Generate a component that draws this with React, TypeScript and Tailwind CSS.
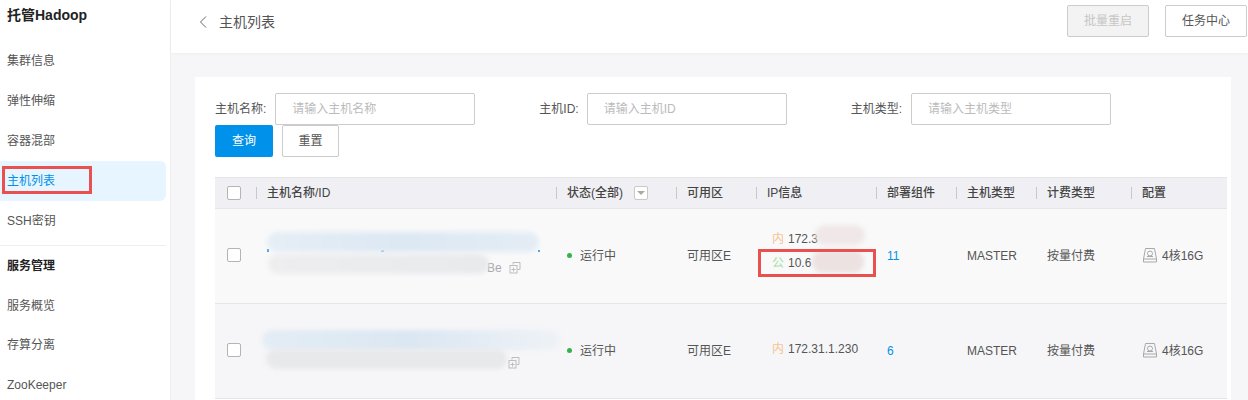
import React from "react"

const gridCols = "grid grid-cols-[41px_300px_120px_80px_120px_80px_80px_95px_96px]"

function NavItem({ label, active }: { label: string; active?: boolean }) {
  return (
    <div className={`relative h-10 flex items-center pl-[7px] mr-[4px] rounded-r-md ${active ? "bg-[#e6f5ff] text-[#0091ea]" : "text-[#555]"}`}>
      {label}
      {active && <div className="absolute left-[2px] top-[5px] w-[90px] h-[28px] border-[3px] border-[#e95050]" />}
    </div>
  )
}

function HeadCell({ label, children }: { label: string; children?: React.ReactNode }) {
  return (
    <div className="flex items-center">
      <span className="w-px h-3 bg-[#c8c8c8] mr-[10px]" />
      <span>{label}</span>
      {children}
    </div>
  )
}

function CopyIcon() {
  return (
    <svg width="12" height="12" viewBox="0 0 12 12" fill="none" stroke="#bdbdbd" strokeWidth="1">
      <path d="M4 2.5V.5h7v7H8.5" />
      <rect x="1" y="3.5" width="7" height="7.5" />
      <path d="M4.5 5.5v4M2.5 7.5h4" />
    </svg>
  )
}

function DiskIcon() {
  return (
    <svg width="14" height="15" viewBox="0 0 14 15" fill="none" stroke="#a8a8a8" strokeWidth="1">
      <path d="M2.5.5h9l2 10.5v3h-13V11z" />
      <path d="M.5 11h13" />
      <circle cx="7" cy="5.5" r="2.5" />
      <path d="M4 8.5h6" />
    </svg>
  )
}

function Smudge({ className }: { className: string }) {
  return <div className={`absolute rounded-full blur-[2px] ${className}`} />
}

function Row({ rowBg, count, name, ip }: { rowBg: string; count: string; name: React.ReactNode; ip: React.ReactNode }) {
  return (
    <div className={`${gridCols} h-[95px] items-center border-b border-[#e6e6e6] ${rowBg}`}>
      <div className="pl-3 -mt-[4px]">
        <div className="w-[14px] h-[14px] bg-white border border-[#b4b4b4] rounded-[2px]" />
      </div>
      {name}
      <div className="flex items-center pl-[11px] -mt-[2px]">
        <span className="w-[5px] h-[5px] rounded-full bg-[#35b34a] mr-2" />
        运行中
      </div>
      <div className="pl-[11px] -mt-[2px]">可用区E</div>
      {ip}
      <div className="pl-[11px] -mt-[2px] text-[#0091ea]">{count}</div>
      <div className="pl-[11px] -mt-[2px]">MASTER</div>
      <div className="pl-[11px] -mt-[2px]">按量付费</div>
      <div className="flex items-center gap-[5px] pl-3 -mt-[2px]">
        <DiskIcon />
        4核16G
      </div>
    </div>
  )
}

export default function App() {
  return (
    <div className="w-[1248px] h-[400px] overflow-hidden flex bg-[#f6f6f8] text-xs text-[#555] font-['Liberation_Sans','Noto_Sans_CJK_SC',sans-serif]">
      {/* Sidebar */}
      <aside className="w-[171px] shrink-0 bg-white border-r border-[#eeeeee]">
        <div className="h-[30px] flex items-center pl-[7px] text-sm font-bold text-[#222]">托管Hadoop</div>
        <div className="mt-[11px]">
          <NavItem label="集群信息" />
          <NavItem label="弹性伸缩" />
          <NavItem label="容器混部" />
          <NavItem label="主机列表" active />
          <NavItem label="SSH密钥" />
        </div>
        <div className="mt-[4px] mr-[4px] border-t border-[#eeeeee]" />
        <div className="h-10 flex items-center pl-[7px] font-bold text-[#222]">服务管理</div>
        <NavItem label="服务概览" />
        <div className="-mt-px">
          <NavItem label="存算分离" />
          <NavItem label="ZooKeeper" />
        </div>
      </aside>

      <main className="flex-1 min-w-0">
        {/* Top bar */}
        <div className="relative h-[53px] bg-white flex justify-between pt-[5px] pl-7 pr-px shadow-[0_1px_3px_rgba(0,0,0,0.03)]">
          <div className="flex items-center h-[33px] text-sm">
            <svg width="8" height="12" viewBox="0 0 8 12" fill="none" stroke="#666" strokeWidth="1">
              <path d="M7 .5 1.5 6 7 11.5" />
            </svg>
            <span className="ml-3">主机列表</span>
          </div>
          <div className="flex gap-4">
            <button className="w-[82px] h-8 bg-[#f3f3f3] border border-[#cccccc] rounded-[2px] text-[#c6c6c6]">批量重启</button>
            <button className="w-[82px] h-8 bg-white border border-[#cccccc] rounded-[2px] text-[#555]">任务中心</button>
          </div>
        </div>

        {/* Card */}
        <div className="mt-6 ml-6 w-[1036px] h-[400px] bg-white pt-4 pl-5">
          <div className="flex gap-16">
            <div className="flex items-center">
              <span className="mr-[9px]">主机名称:</span>
              <div className="w-[200px] h-8 flex items-center pl-4 border border-[#cccccc] rounded-[2px] text-[#bbbbbb]">请输入主机名称</div>
            </div>
            <div className="flex items-center">
              <span className="mr-[8px]">主机ID:</span>
              <div className="w-[200px] h-8 flex items-center pl-4 border border-[#cccccc] rounded-[2px] text-[#bbbbbb]">请输入主机ID</div>
            </div>
            <div className="flex items-center">
              <span className="mr-[9px]">主机类型:</span>
              <div className="w-[200px] h-8 flex items-center pl-4 border border-[#cccccc] rounded-[2px] text-[#bbbbbb]">请输入主机类型</div>
            </div>
          </div>
          <div className="flex gap-[9px]">
            <button className="w-[58px] h-8 bg-[#0091ea] text-white rounded-[2px]">查询</button>
            <button className="w-[57px] h-8 bg-white border border-[#cccccc] rounded-[2px]">重置</button>
          </div>

          {/* Table */}
          <div className="mt-5 w-[1012px] text-[#555]">
            <div className={`${gridCols} h-[32px] items-center bg-[#f0f0f4] border-y border-[#e6e6e6] font-medium text-[#444]`}>
              <div className="pl-3">
                <div className="w-[14px] h-[14px] bg-white border border-[#b4b4b4] rounded-[2px]" />
              </div>
              <HeadCell label="主机名称/ID" />
              <HeadCell label="状态(全部)">
                <span className="ml-[11px] w-[14px] h-[14px] flex items-center justify-center bg-white border border-[#c8c8c8] rounded-[2px]">
                  <span className="border-x-[4px] border-x-transparent border-t-[4px] border-t-[#aaaaaa]" />
                </span>
              </HeadCell>
              <HeadCell label="可用区" />
              <HeadCell label="IP信息" />
              <HeadCell label="部署组件" />
              <HeadCell label="主机类型" />
              <HeadCell label="计费类型" />
              <HeadCell label="配置" />
            </div>

            <Row
              rowBg="bg-[#f9f9fa]"
              count="11"
              name={
                <div className="relative h-[95px]">
                  <span className="absolute left-[11px] top-[40px] w-[2px] h-[3px] bg-[#4aa3ee]" />
                  <span className="absolute left-[125px] top-[41px] w-[3px] h-[2px] bg-[#4aa3ee]" />
                  <span className="absolute left-[282px] top-[41px] w-[2px] h-[2px] bg-[#4aa3ee]" />
                  <div className="absolute left-[231px] top-[51px] text-[#aaaaaa]">Be</div>
                  <div className="absolute left-[253px] top-[53px]"><CopyIcon /></div>
                  <Smudge className="left-[11px] top-[23px] w-[272px] h-[20px] bg-gradient-to-r from-[#e6eef6] via-[#dce8f3] to-[#e4edf5]" />
                  <Smudge className="left-[12px] top-[45px] w-[221px] h-[20px] bg-gradient-to-r from-[#eeeeef] via-[#ebecee] to-[#e9eaec]" />
                </div>
              }
              ip={
                <div className="relative h-[95px]">
                  <div className="absolute left-4 top-[22px] flex items-center gap-[4px] h-[16px]">
                    <span className="text-[#f5c48f]">内</span>172.3
                  </div>
                  <div className="absolute left-4 top-[46px] flex items-center gap-[4px] h-[16px]">
                    <span className="text-[#a3e0a0]">公</span>10.6
                  </div>
                  <Smudge className="left-[59px] top-[16px] w-[50px] h-5 bg-[#f0e8e8]" />
                  <Smudge className="left-[56px] top-[41px] w-[52px] h-[23px] bg-[#ece2e2]" />
                  <div className="absolute left-[2px] top-[40px] w-[118px] h-[28px] border-[3px] border-[#e95050]" />
                </div>
              }
            />
            <Row
              rowBg="bg-[#f6f6f8]"
              count="6"
              name={
                <div className="relative h-[95px]">
                  <div className="absolute left-[252px] top-[53px]"><CopyIcon /></div>
                  <Smudge className="left-[6px] top-[26px] w-[298px] h-5 bg-gradient-to-r from-[#e4edf5] via-[#dbe7f2] to-[#eef2f7]" />
                  <Smudge className="left-[10px] top-[45px] w-[241px] h-5 bg-[#e8e9eb]" />
                </div>
              }
              ip={
                <div className="pl-4 -mt-[6px] flex items-center gap-[4px]">
                  <span className="text-[#f5c48f]">内</span>172.31.1.230
                </div>
              }
            />
          </div>
        </div>
      </main>
    </div>
  )
}
